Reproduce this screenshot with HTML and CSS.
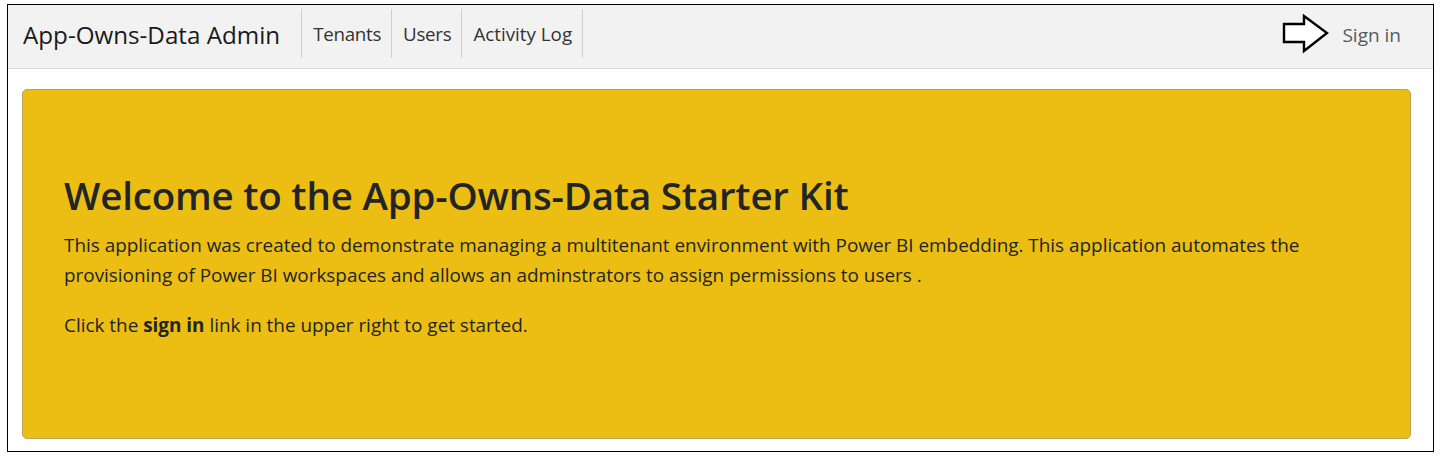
FILE: index.html
```html
<!DOCTYPE html>
<html lang="en">
<head>
<meta charset="utf-8">
<title>App-Owns-Data Admin</title>
<link rel="stylesheet" href="styles.css">
</head>
<body>
<div class="frame">
  <nav class="navbar">
    <a class="brand" href="#">App-Owns-Data Admin</a>
    <ul class="nav">
      <li class="nav-item"><a href="#">Tenants</a></li>
      <li class="nav-item"><a href="#">Users</a></li>
      <li class="nav-item wide"><a href="#">Activity Log</a></li>
    </ul>
    <div class="right">
      <svg class="arrow" width="48" height="40" viewBox="0 0 48 40" aria-hidden="true">
        <path d="M2 10 H22 V2 L45 19 L22 37 V28 H2 Z" fill="#fff" stroke="#000" stroke-width="2.4" stroke-linejoin="miter"/>
      </svg>
      <a class="signin" href="#">Sign in</a>
    </div>
  </nav>
  <main class="content">
    <section class="jumbotron">
      <h1>Welcome to the App-Owns-Data Starter Kit</h1>
      <p>This application was created to demonstrate managing a multitenant environment with Power BI embedding. This application automates the provisioning of Power BI workspaces and allows an adminstrators to assign permissions to users .</p>
      <p>Click the <strong>sign in</strong> link in the upper right to get started.</p>
    </section>
  </main>
</div>
</body>
</html>
```

FILE: styles.css
```css
* { box-sizing: border-box; }
html, body { margin: 0; padding: 0; background: #fff; }
body {
  font-family: "Open Sans", "Noto Sans", "Liberation Sans", sans-serif;
  color: #212529;
}
a { text-decoration: none; }

.frame {
  margin: 4px 0 0 7px;
  width: 1427px;
  height: 448px;
  border: 1px solid #000;
  background: #fff;
}

.navbar {
  display: flex;
  align-items: center;
  height: 64px;
  background: #f2f2f2;
  border-bottom: 1px solid #dcdcdc;
  padding: 0 32px 4px 15px;
}
.brand {
  font-size: 24.2px;
  color: #1a1a1a;
  margin-right: 21px;
}
.nav {
  display: flex;
  list-style: none;
  margin: 0;
  padding: 0;
  height: 49px;
  margin-top: -2px;
}
.nav-item {
  display: flex;
  align-items: center;
  border-left: 1px solid #cfcfcf;
  padding: 0 10px 0 11px;
}
.nav-item:last-child { border-right: 1px solid #cfcfcf; }
.nav-item a {
  font-size: 18.8px;
  color: #333;
  letter-spacing: -0.3px;
}
.nav-item.wide a { letter-spacing: 0; }
.right {
  margin-left: auto;
  display: flex;
  align-items: center;
  gap: 10px;
}
.arrow { display: block; margin-left: -4px; margin-right: 2px; margin-top: -2px; }
.signin {
  font-size: 19px;
  color: #555a60;
}

.content {
  padding: 20px 22px 0 14px;
}
.jumbotron {
  background: #ecbd12;
  border: 1px solid #b9a45a;
  border-radius: 5px;
  padding: 81px 40px 81px 41px;
  height: 350px;
}
.jumbotron h1 {
  margin: 0 0 11px;
  font-size: 38.5px;
  font-weight: 600;
  line-height: 48px;
  color: #212529;
  letter-spacing: -0.2px;
}
.jumbotron p {
  margin: 0 0 20px;
  font-size: 18.9px;
  line-height: 30px;
  color: #212529;
}
.jumbotron p:last-child { margin-bottom: 0; }
.jumbotron strong { font-weight: 700; }
```
